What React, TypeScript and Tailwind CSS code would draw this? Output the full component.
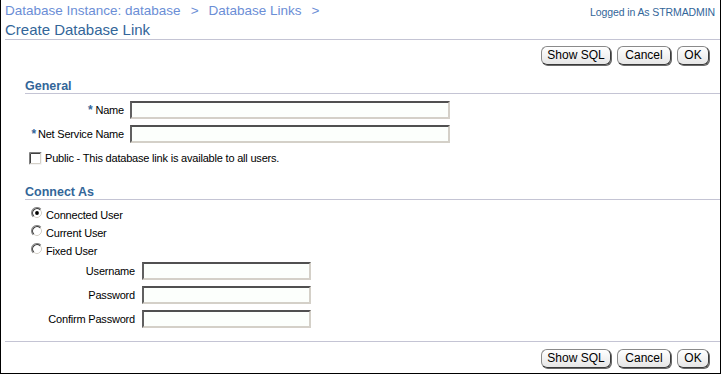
import React from "react";

const font = { fontFamily: '"Liberation Sans", Arial, sans-serif' };

function Btn({ label, w }: { label: string; w: string }) {
  return (
    <button
      className={`${w} h-[19px] rounded-[6px] border border-t-[#8a8a8a] border-l-[#8a8a8a] border-r-[#3a3a3a] border-b-[#3a3a3a] bg-gradient-to-b from-[#ffffff] to-[#e6e6e6] text-[12px] leading-[17px] text-black text-center p-0 shadow-[1px_1px_0_#6a6a6a]`}
    >
      {label}
    </button>
  );
}

function ButtonRow() {
  return (
    <div className="flex justify-end gap-[6px] pr-[11px]">
      <Btn label="Show SQL" w="w-[70px]" />
      <Btn label="Cancel" w="w-[54px]" />
      <Btn label="OK" w="w-[32px]" />
    </div>
  );
}

function Input({ w }: { w: string }) {
  return (
    <div
      className={`${w} h-[18px] bg-[#fcfffc] border-t-2 border-l-2 border-b-2 border-r-2 border-t-[#505050] border-l-[#606060] border-b-[#d4d0c8] border-r-[#d4d0c8]`}
    />
  );
}

function Radio({ checked }: { checked?: boolean }) {
  return (
    <svg width="12" height="12" viewBox="0 0 12 12" className="shrink-0 block">
      <circle cx="6" cy="6" r="5" fill="#ffffff" />
      <path d="M2.11 9.89 A5.5 5.5 0 0 1 9.89 2.11" fill="none" stroke="#8a8a8a" strokeWidth="1.1" />
      <path d="M2.82 9.18 A4.5 4.5 0 0 1 9.18 2.82" fill="none" stroke="#3a3a3a" strokeWidth="1.1" />
      <path d="M9.18 2.82 A4.5 4.5 0 0 1 2.82 9.18" fill="none" stroke="#d4d0c8" strokeWidth="1" />
      {checked && <circle cx="6" cy="6" r="1.9" fill="#000000" />}
    </svg>
  );
}

function Checkbox() {
  return (
    <svg width="13" height="13" viewBox="0 0 13 13" className="shrink-0 block">
      <rect x="0" y="0" width="13" height="13" fill="#ffffff" />
      <path d="M0.5 12.5 V0.5 H12.5" fill="none" stroke="#808080" />
      <path d="M1.5 11.5 V1.5 H11.5" fill="none" stroke="#404040" />
      <path d="M12.5 0.5 V12.5 H0.5" fill="none" stroke="#f4f4f4" />
      <path d="M11.5 1.5 V11.5 H1.5" fill="none" stroke="#d4d0c8" />
    </svg>
  );
}

export default function App() {
  return (
    <div
      style={font}
      className="w-[721px] h-[374px] box-border bg-white border-l border-r border-b border-black text-black overflow-hidden"
    >
      {/* header */}
      <div className="flex justify-between items-start h-[19px] pt-[3px] pl-[4px] pr-[5px]">
        <div className="text-[13.5px] leading-[16px] text-[#6b8ed6] whitespace-nowrap">
          <span>Database Instance: database</span>
          <span className="mx-[10px]">&gt;</span>
          <span>Database Links</span>
          <span className="ml-[10px]">&gt;</span>
        </div>
        <div className="mt-[2px] text-[10.5px] leading-[14px] tracking-[-0.1px] text-[#336699] whitespace-nowrap">
          Logged in As STRMADMIN
        </div>
      </div>
      <div className="mt-[1px] pl-[4px] text-[15px] leading-[19px] text-[#336699]">
        Create Database Link
      </div>
      <div className="ml-[4px] h-px bg-[#c4c4d4]" />

      <div className="mt-[6px]">
        <ButtonRow />
      </div>

      <div className="ml-[24px]">
        {/* General */}
        <div className="mt-[14px] text-[12.5px] leading-[14px] font-bold text-[#336699]">General</div>
        <div className="h-px bg-[#c4c4d4]" />

        <div className="mt-[7px] flex flex-col gap-[6px] text-[11px] tracking-[-0.2px]">
          <div className="flex items-center gap-[6px]">
            <div className="w-[99px] text-right leading-[18px] whitespace-nowrap">
              <span className="text-[#336699] font-bold text-[12px] mr-[3px]">*</span>Name
            </div>
            <Input w="w-[320px]" />
          </div>
          <div className="flex items-center gap-[6px]">
            <div className="w-[99px] text-right leading-[18px] whitespace-nowrap">
              <span className="text-[#336699] font-bold text-[12px] mr-[2px]">*</span>Net Service Name
            </div>
            <Input w="w-[320px]" />
          </div>
        </div>

        <div className="mt-[9px] ml-[4px] flex items-center gap-[3px] h-[13px] text-[11px] leading-[13px] tracking-[-0.2px]">
          <Checkbox />
          <span className="whitespace-nowrap">Public - This database link is available to all users.</span>
        </div>

        {/* Connect As */}
        <div className="mt-[20px] text-[12.5px] leading-[14px] font-bold text-[#336699]">Connect As</div>
        <div className="h-px bg-[#c4c4d4]" />

        <div className="mt-[6px] ml-[6px] flex flex-col text-[11px] leading-[18px] tracking-[-0.2px]">
          <div className="flex items-start gap-[3px] h-[18px]">
            <div className="mt-[1px]"><Radio checked /></div>
            <span>Connected User</span>
          </div>
          <div className="flex items-start gap-[3px] h-[18px]">
            <div className="mt-[1px]"><Radio /></div>
            <span>Current User</span>
          </div>
          <div className="flex items-start gap-[3px] h-[18px]">
            <div className="mt-[1px]"><Radio /></div>
            <span>Fixed User</span>
          </div>
        </div>

        <div className="mt-[2px] flex flex-col gap-[6px] text-[11px] tracking-[-0.2px]">
          <div className="flex items-center gap-[7px]">
            <div className="w-[110px] text-right leading-[18px] whitespace-nowrap">Username</div>
            <Input w="w-[169px]" />
          </div>
          <div className="flex items-center gap-[7px]">
            <div className="w-[110px] text-right leading-[18px] whitespace-nowrap">Password</div>
            <Input w="w-[169px]" />
          </div>
          <div className="flex items-center gap-[7px]">
            <div className="w-[110px] text-right leading-[18px] whitespace-nowrap">Confirm Password</div>
            <Input w="w-[169px]" />
          </div>
        </div>
      </div>

      <div className="mt-[13px] ml-[4px] h-px bg-[#c4c4d4]" />
      <div className="mt-[7px]">
        <ButtonRow />
      </div>
    </div>
  );
}
